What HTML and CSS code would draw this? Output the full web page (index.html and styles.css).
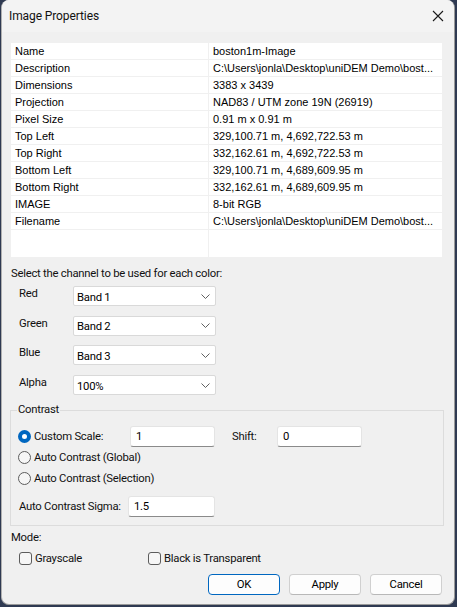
FILE: index.html
```html
<!DOCTYPE html>
<html>
<head>
<meta charset="utf-8">
<link rel="stylesheet" href="styles.css">
</head>
<body>
<div class="window">
  <div class="titlebar">
    <span class="title">Image Properties</span>
    <svg class="close" width="12" height="12" viewBox="0 0 12 12"><path d="M1 1 L11 11 M11 1 L1 11" stroke="#1a1a1a" stroke-width="1.1" fill="none"/></svg>
  </div>
  <div class="content">
    <div class="list">
      <div class="row"><div class="k">Name</div><div class="v">boston1m-Image</div></div>
      <div class="row"><div class="k">Description</div><div class="v">C:\Users\jonla\Desktop\uniDEM Demo\bost...</div></div>
      <div class="row"><div class="k">Dimensions</div><div class="v">3383 x 3439</div></div>
      <div class="row"><div class="k">Projection</div><div class="v">NAD83 / UTM zone 19N (26919)</div></div>
      <div class="row"><div class="k">Pixel Size</div><div class="v">0.91 m x 0.91 m</div></div>
      <div class="row"><div class="k">Top Left</div><div class="v">329,100.71 m, 4,692,722.53 m</div></div>
      <div class="row"><div class="k">Top Right</div><div class="v">332,162.61 m, 4,692,722.53 m</div></div>
      <div class="row"><div class="k">Bottom Left</div><div class="v">329,100.71 m, 4,689,609.95 m</div></div>
      <div class="row"><div class="k">Bottom Right</div><div class="v">332,162.61 m, 4,689,609.95 m</div></div>
      <div class="row"><div class="k">IMAGE</div><div class="v">8-bit RGB</div></div>
      <div class="row"><div class="k">Filename</div><div class="v">C:\Users\jonla\Desktop\uniDEM Demo\bost...</div></div>
      <div class="row filler"><div class="k"></div><div class="v"></div></div>
    </div>

    <div class="prompt">Select the channel to be used for each color:</div>
    <div class="channels">
      <div class="ch-label">Red</div><div class="combo"><span>Band 1</span><svg class="chev" width="9" height="5" viewBox="0 0 9 5"><path d="M0.5 0.5 L4.5 4.5 L8.5 0.5" stroke="#606060" fill="none"/></svg></div>
      <div class="ch-label">Green</div><div class="combo"><span>Band 2</span><svg class="chev" width="9" height="5" viewBox="0 0 9 5"><path d="M0.5 0.5 L4.5 4.5 L8.5 0.5" stroke="#606060" fill="none"/></svg></div>
      <div class="ch-label">Blue</div><div class="combo"><span>Band 3</span><svg class="chev" width="9" height="5" viewBox="0 0 9 5"><path d="M0.5 0.5 L4.5 4.5 L8.5 0.5" stroke="#606060" fill="none"/></svg></div>
      <div class="ch-label">Alpha</div><div class="combo"><span>100%</span><svg class="chev" width="9" height="5" viewBox="0 0 9 5"><path d="M0.5 0.5 L4.5 4.5 L8.5 0.5" stroke="#606060" fill="none"/></svg></div>
    </div>

    <fieldset class="group">
      <legend>Contrast</legend>
      <div class="scale-row">
        <div class="radio-item custom"><span class="radio checked"></span><span>Custom Scale:</span></div>
        <div class="field w85">1</div>
        <div class="shift-label">Shift:</div>
        <div class="field w85">0</div>
      </div>
      <div class="radio-item"><span class="radio"></span><span>Auto Contrast (Global)</span></div>
      <div class="radio-item"><span class="radio"></span><span>Auto Contrast (Selection)</span></div>
      <div class="sigma-row">
        <div class="sigma-label">Auto Contrast Sigma:</div>
        <div class="field w87">1.5</div>
      </div>
    </fieldset>

    <div class="mode">Mode:</div>
    <div class="checks">
      <div class="check-item gray"><span class="box"></span><span>Grayscale</span></div>
      <div class="check-item"><span class="box"></span><span>Black is Transparent</span></div>
    </div>

    <div class="buttons">
      <div class="btn default">OK</div>
      <div class="btn">Apply</div>
      <div class="btn">Cancel</div>
    </div>
  </div>
</div>
</body>
</html>
```

FILE: styles.css
```css
html, body {
  margin: 0;
  padding: 0;
}
body {
  background: #2f3a52;
  width: 457px;
  height: 607px;
  overflow: hidden;
  font-family: Roboto, "Open Sans", sans-serif;
  font-size: 11.3px;
  letter-spacing: -0.25px;
  color: #111;
}
.window {
  margin: 0 0 0 1px;
  width: 454px;
  height: 605px;
  background: #f0f0f0;
  border-right: 1px solid #9a9a9a;
  border-bottom: 1px solid #9a9a9a;
  border-left: 1px solid #b0b0b0;
  border-radius: 8px;
  overflow: hidden;
  box-sizing: border-box;
}
.titlebar {
  height: 32px;
  background: #f3f3f3;
  display: flex;
  align-items: center;
  justify-content: space-between;
  padding: 0 10px 0 7px;
}
.title {
  font-size: 12px;
  letter-spacing: -0.1px;
}
.close {
  display: block;
}
.content {
  padding: 11px 0 0 9px;
}
.list {
  width: 431px;
  height: 214px;
  background: #fff;
  font-family: "Liberation Sans", Arial, sans-serif;
  font-size: 11px;
  letter-spacing: 0;
  color: #000;
  display: flex;
  flex-direction: column;
}
.row {
  display: flex;
  height: 16px;
  border-bottom: 1px solid #f0f0f0;
  line-height: 16px;
}
.row .k {
  width: 198px;
  padding-left: 4px;
  border-right: 1px solid #f0f0f0;
  box-sizing: border-box;
}
.row .v {
  padding-left: 4px;
  white-space: nowrap;
}
.row.filler {
  flex: 1;
  border-bottom: none;
}
.prompt {
  margin-top: 9px;
  line-height: 16px;
  white-space: nowrap;
}
.channels {
  display: grid;
  grid-template-columns: 54px 143px;
  row-gap: 9.7px;
  margin: 4px 0 0 8px;
}
.ch-label {
  line-height: 16px;
}
.combo {
  height: 20px;
  background: #fff;
  border: 1px solid #d9d9d9;
  border-radius: 2px;
  box-sizing: border-box;
  display: flex;
  align-items: center;
  justify-content: space-between;
  padding: 0 5px 0 3px;
  color: #000;
}
.combo span {
  position: relative;
  top: 1px;
}
.group {
  margin: 8px 0 0 -1px;
  width: 434px;
  height: 123px;
  box-sizing: border-box;
  border: 1px solid #dcdcdc;
  padding: 0 0 0 7px;
}
.group legend {
  padding: 0 1px;
  margin-left: -1px;
  line-height: 14px;
}
.scale-row {
  display: flex;
  align-items: center;
  margin-top: 9px;
  white-space: nowrap;
}
.radio-item {
  display: flex;
  align-items: center;
  height: 21px;
  white-space: nowrap;
}
.radio-item.custom {
  width: 112px;
}
.radio {
  width: 13px;
  height: 13px;
  box-sizing: border-box;
  border-radius: 50%;
  border: 1px solid #5c5c5c;
  background: #f6f6f6;
  margin-right: 3px;
  flex: none;
}
.radio.checked {
  background: #fff;
  border: 4px solid #0067c0;
}
.field {
  height: 21px;
  background: #fff;
  border: 1px solid #e4e4e4;
  border-bottom-color: #8a8a8a;
  border-radius: 3px;
  box-sizing: border-box;
  padding: 2px 5px 0 5px;
  line-height: 16px;
  color: #000;
  flex: none;
}
.w85 { width: 85px; }
.w87 { width: 87px; }
.shift-label {
  width: 45px;
  padding-left: 17px;
}
.sigma-row {
  display: flex;
  align-items: center;
  margin-top: 7px;
  white-space: nowrap;
}
.sigma-label {
  width: 110px;
  padding-left: 1px;
  box-sizing: border-box;
  flex: none;
}
.mode {
  margin-top: 4px;
  line-height: 16px;
}
.checks {
  display: flex;
  margin: 4px 0 0 8px;
  white-space: nowrap;
}
.check-item {
  display: flex;
  align-items: center;
  height: 16px;
}
.check-item.gray {
  width: 129px;
}
.box {
  width: 13px;
  height: 13px;
  box-sizing: border-box;
  border: 1px solid #5c5c5c;
  border-radius: 3px;
  background: #f6f6f6;
  margin-right: 3px;
  flex: none;
}
.buttons {
  display: flex;
  gap: 9px;
  margin: 8px 0 0 197px;
}
.btn {
  width: 72px;
  height: 21px;
  box-sizing: border-box;
  border: 1px solid #d0d0d0;
  border-bottom-color: #b8b8b8;
  border-radius: 4px;
  background: #fdfdfd;
  text-align: center;
  line-height: 19px;
  color: #000;
}
.btn.default {
  border: 1px solid #0067c0;
}
```
